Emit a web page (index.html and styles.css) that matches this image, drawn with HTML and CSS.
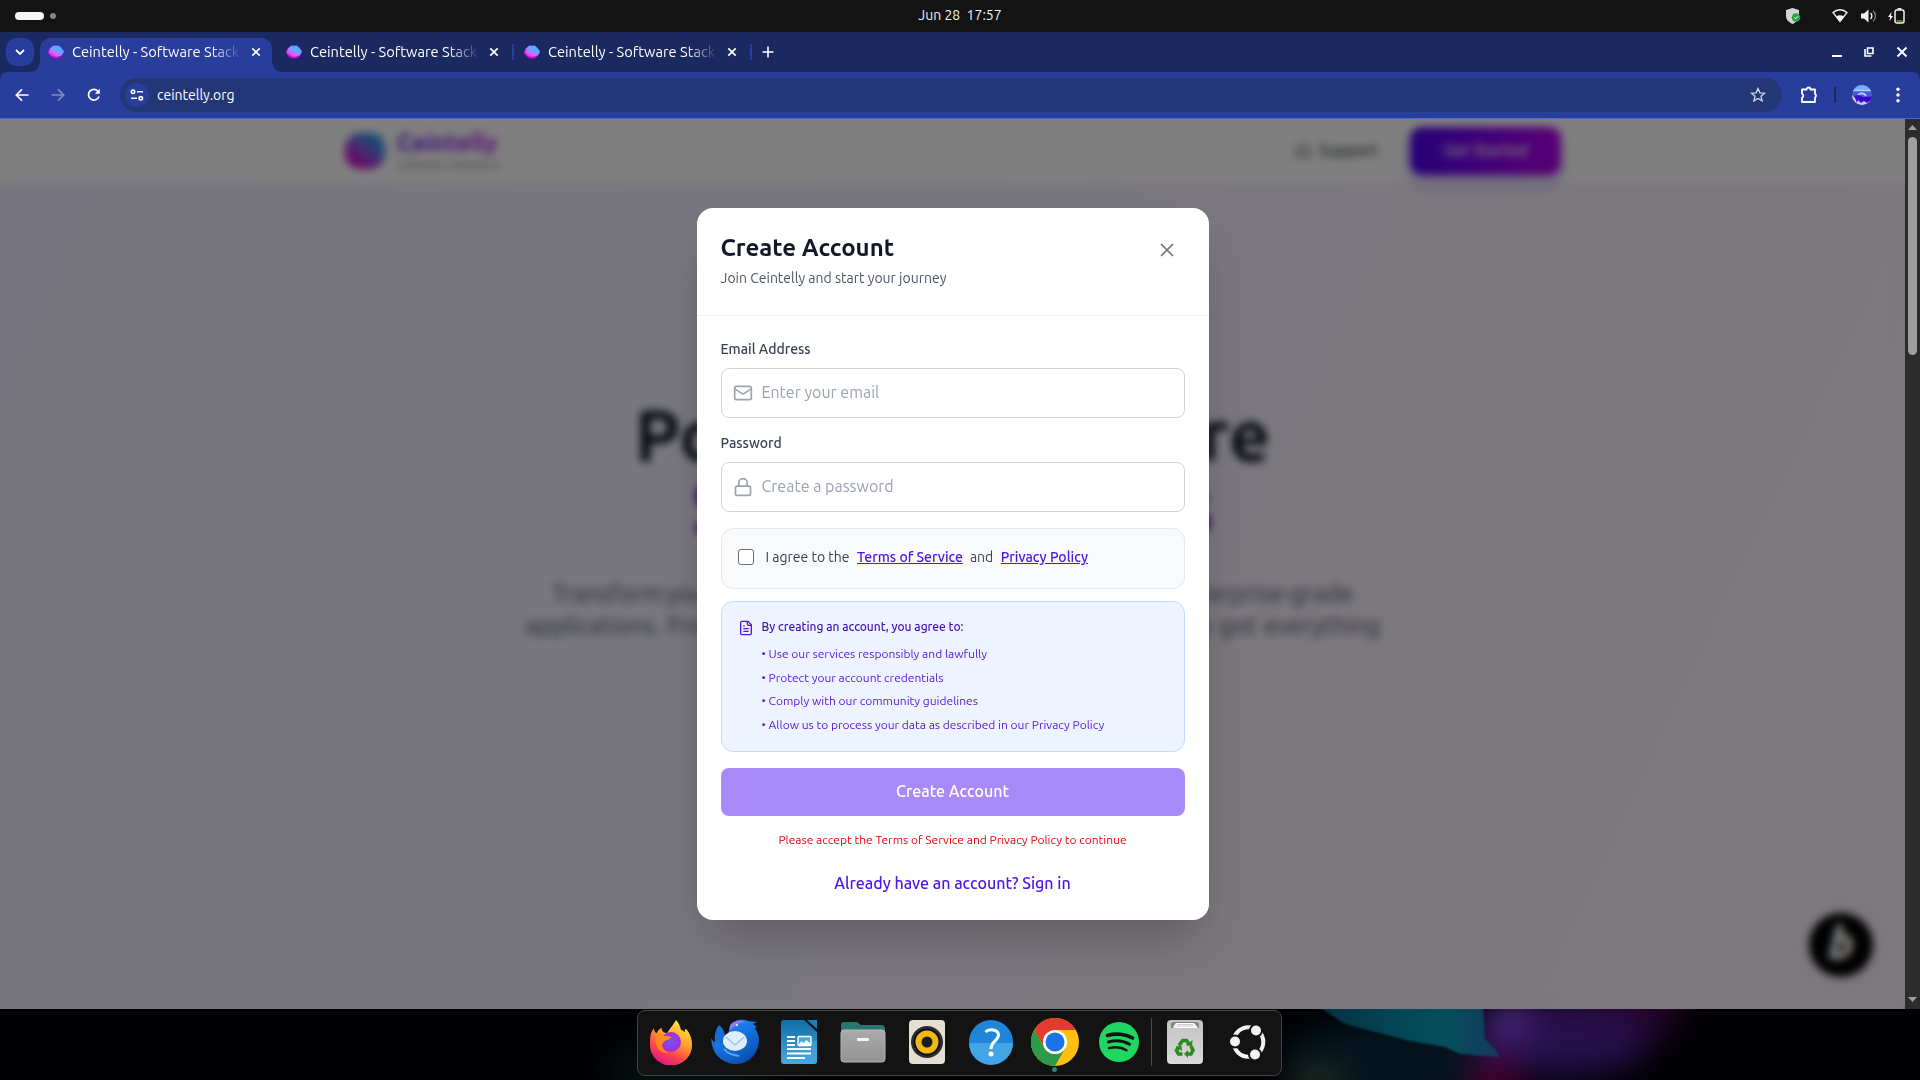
FILE: index.html
```html
<!DOCTYPE html>
<html lang="en">
<head>
  <meta charset="UTF-8">
  <meta name="viewport" content="width=device-width, initial-scale=1.0">
  <title>Ceintelly - Software Stack</title>
  <link rel="stylesheet" href="styles.css">
</head>
<body>
  <!-- shared gradients and symbols -->
  <svg class="defs" width="0" height="0">
    <defs>
      <linearGradient id="brand" x1="0.9" y1="0" x2="0.1" y2="1">
        <stop offset="0.100" stop-color="#22c3ff"/>
        <stop offset="0.450" stop-color="#7c9cff"/>
        <stop offset="0.700" stop-color="#d860f0"/>
        <stop offset="1" stop-color="#e000d8"/>
      </linearGradient>
      <linearGradient id="brand-deep" x1="0.9" y1="0" x2="0.1" y2="1">
        <stop offset="0.150" stop-color="#1f9bea"/>
        <stop offset="0.500" stop-color="#8a5ae0"/>
        <stop offset="0.800" stop-color="#d010d0"/>
      </linearGradient>
      <symbol id="favicon" viewBox="0 0 16 16" preserveAspectRatio="none">
        <path d="M5 1l1.500-.8L8 1l1.500-.8L11 1l2.500 2L16 7v2l-2.500 4-2.500 2-1.500.8L8 15l-1.500.8L5 15l-2.500-2L0 9V7l2.500-4z" fill="#c800dc"/>
        <path d="M2 4L5 .8h6l2.500 2.500L16 7.500l-2.500 4.500L8 14l-4-1.500L.5 9z" fill="url(#brand)"/>
      </symbol>
      <symbol id="close" viewBox="0 0 12 12">
        <path d="M2.300 2.300l7.400 7.400M9.700 2.300l-7.400 7.400" stroke="currentColor" stroke-width="1.700" fill="none"/>
      </symbol>
    </defs>
  </svg>

  <div class="desktop">
    <div class="topbar">
      <div class="workspaces"><span class="ws active"></span><span class="ws"></span></div>
      <div class="clock">Jun 28&nbsp; 17:57</div>
      <div class="tray">
        <svg class="tray-shield" width="15" height="16" viewBox="0 0 15 16">
          <path d="M6.500 0L13 2v6c0 4-3.500 6.500-6.500 8C3.500 14.500 0 12 0 8V2z" fill="#d4d4d4"/>
          <circle cx="10" cy="9.500" r="4.300" fill="#27a844"/>
          <path d="M8.200 9.500l1.400 1.400 2.400-2.600" stroke="#fff" fill="none"/>
        </svg>
        <svg width="16" height="14" viewBox="0 0 16 14">
          <path d="M1 3.500C5-.2 11-.2 15 3.500L8 12.500z" fill="none" stroke="#f2f2f2" stroke-width="1.300"/>
          <path d="M4.200 7.500c2.200-1.600 5.400-1.600 7.600 0L8 12.800z" fill="#f2f2f2"/>
        </svg>
        <svg class="tray-volume" width="16" height="14" viewBox="0 0 16 14">
          <path d="M0 4.500h3L7.500.5v13L3 9.500H0z" fill="#f2f2f2"/>
          <path d="M9.500 4c1.800 1.600 1.800 4.400 0 6" stroke="#f2f2f2" stroke-width="1.400" fill="none"/>
          <path d="M12 1.800c3.300 2.700 3.300 7.700 0 10.400" stroke="#8c8c8c" stroke-width="1.200" fill="none"/>
        </svg>
        <svg width="17" height="16" viewBox="0 0 17 16">
          <path d="M3.500 4L0 9h2l-.5 4L5 8H3z" fill="#f2f2f2"/>
          <rect x="7" y="2" width="9" height="13" rx="2" fill="none" stroke="#f2f2f2" stroke-width="1.500"/>
          <path d="M9.500.8h4" stroke="#f2f2f2" stroke-width="1.500"/>
          <path d="M8.500 13h6" stroke="#5ea818" stroke-width="1.500"/>
        </svg>
      </div>
    </div>

    <div class="browser">
      <div class="tabstrip">
        <div class="tab-search">
          <svg width="10" height="6" viewBox="0 0 10 6"><path d="M1 1l4 4 4-4" stroke="#fff" stroke-width="1.800" fill="none"/></svg>
        </div>
        <div class="tab active">
          <svg class="favicon"><use href="#favicon"/></svg>
          <span class="tab-title">Ceintelly - Software Stack</span>
          <svg class="tab-close"><use href="#close"/></svg>
        </div>
        <span class="tab-sep hidden"></span>
        <div class="tab">
          <svg class="favicon"><use href="#favicon"/></svg>
          <span class="tab-title">Ceintelly - Software Stack</span>
          <svg class="tab-close"><use href="#close"/></svg>
        </div>
        <span class="tab-sep"></span>
        <div class="tab">
          <svg class="favicon"><use href="#favicon"/></svg>
          <span class="tab-title">Ceintelly - Software Stack</span>
          <svg class="tab-close"><use href="#close"/></svg>
        </div>
        <span class="tab-sep"></span>
        <svg class="new-tab" width="12" height="12" viewBox="0 0 12 12"><path d="M6 .5v11M.5 6h11" stroke="#fff" stroke-width="1.600"/></svg>
        <div class="window-controls">
          <svg width="10" height="12" viewBox="0 0 10 12"><path d="M0 10h10" stroke="#fff" stroke-width="2"/></svg>
          <svg width="10" height="10" viewBox="0 0 10 10"><path d="M1 2v7h6.500M3.500 1h5.500v5.500H3.500z" fill="none" stroke="#fff" stroke-width="1.600"/></svg>
          <svg width="12" height="12" viewBox="0 0 12 12"><path d="M1.500 1.500l9 9M10.500 1.500l-9 9" stroke="#fff" stroke-width="1.900"/></svg>
        </div>
      </div>

      <div class="toolbar">
        <div class="nav">
          <svg width="14" height="14" viewBox="0 0 14 14"><path d="M13.500 7H1.500M7 1.300L1.300 7 7 12.700" stroke="#fff" stroke-width="1.700" fill="none"/></svg>
          <svg class="disabled" width="14" height="14" viewBox="0 0 14 14"><path d="M.5 7h12M7 1.300L12.700 7 7 12.700" stroke="#fff" stroke-width="1.700" fill="none"/></svg>
          <svg width="14" height="14" viewBox="0 0 14 14"><path d="M12 8.500A5.400 5.400 0 1 1 11.200 3.400" stroke="#fff" stroke-width="1.700" fill="none"/><path d="M12.800.8v4.900H7.900z" fill="#fff"/></svg>
        </div>
        <div class="omnibox">
          <div class="site-info">
            <svg width="14" height="12" viewBox="0 0 14 12"><g stroke="#fff" stroke-width="1.600" fill="none"><circle cx="3" cy="2.700" r="1.700"/><path d="M7 2.700h6M1 9.300h6"/><circle cx="10.800" cy="9.300" r="1.700"/></g></svg>
          </div>
          <span class="url">ceintelly.org</span>
          <svg class="star" width="16" height="16" viewBox="0 0 16 16"><path d="M8 1.500l1.900 4.300 4.700.4-3.600 3.100 1.100 4.600L8 11.500l-4.100 2.400L5 9.300 1.400 6.200l4.700-.4z" fill="none" stroke="#d4d8e6" stroke-width="1.300"/></svg>
        </div>
        <div class="toolbar-right">
          <svg width="18" height="18" viewBox="0 0 18 18"><path d="M2 3.500h4.500a2 2 0 0 1 4 0H15v4.500a2 2 0 0 1 0 3.500V16H2v-4.200a2.200 2.200 0 0 0 0-4z" fill="none" stroke="#fff" stroke-width="1.800" stroke-linejoin="round"/></svg>
          <span class="divider"></span>
          <svg width="20" height="20" viewBox="0 0 20 20">
            <clipPath id="av"><circle cx="10" cy="10" r="10"/></clipPath>
            <g clip-path="url(#av)">
              <path d="M0 0h20v20H0z" fill="#4558e0"/><path d="M0 0h20v5H0z" fill="#6db5ec"/>
              <path d="M1 5.500h18" stroke="#b9c2fa" stroke-width="1.500"/>
              <path d="M6 11c1-3 6-4 8 0" stroke="#c9d0ff" stroke-width="1.600" fill="none"/>
              <path d="M2 11l5-1 6 3 7-2v4l-5 3H5z" fill="#3d0bd0"/>
              <path d="M0 10l3 3 2 5 1-3 3 3 3-2 3 2 4-3-1 6H0z" fill="#c8cdf4"/><path d="M6 12h11l1 3-4 1-2-1-3 2z" fill="#3906c4"/>
            </g>
          </svg>
          <svg class="menu-dots" width="4" height="16" viewBox="0 0 4 16" fill="#fff"><circle cx="2" cy="2.200" r="1.700"/><circle cx="2" cy="8" r="1.700"/><circle cx="2" cy="13.800" r="1.700"/></svg>
        </div>
      </div>

      <div class="viewport">
        <div class="page">
          <div class="site-header">
            <div class="brand">
              <svg class="brand-logo" width="40" height="36" viewBox="0 0 40 36"><rect width="40" height="36" rx="15" fill="url(#brand-deep)"/></svg>
              <div class="brand-text">
                <span class="brand-name">Ceintelly</span>
                <span class="brand-sub">Software Solutions</span>
              </div>
            </div>
            <div class="site-nav">
              <svg width="16" height="16" viewBox="0 0 24 24" fill="none" stroke="#374151" stroke-width="2"><path d="M3 14h3a2 2 0 0 1 2 2v3a2 2 0 0 1-2 2H5a2 2 0 0 1-2-2v-7a9 9 0 0 1 18 0v7a2 2 0 0 1-2 2h-1a2 2 0 0 1-2-2v-3a2 2 0 0 1 2-2h3"/></svg>
              <span class="support">Support</span>
              <span class="get-started">Get Started</span>
            </div>
          </div>
          <div class="hero">
            <h1>Powerful Software</h1>
            <h1 class="accent">Stack Solutions</h1>
            <p class="lead lead-1">Transform your business with cutting-edge technology and enterprise-grade</p>
            <p class="lead lead-2">applications. From web platforms to mobile apps and AI, we've got everything</p>
          </div>
          <div class="badge"><span>b</span></div>
        </div>

        <div class="overlay">
          <div class="modal">
            <div class="modal-header">
              <div>
                <h2>Create Account</h2>
                <p>Join Ceintelly and start your journey</p>
              </div>
              <svg class="modal-close" width="24" height="24" viewBox="0 0 24 24"><path d="M17.500 6.500l-11 11M6.500 6.500l11 11" stroke="#6b7280" stroke-width="1.700" stroke-linecap="round"/></svg>
            </div>
            <div class="modal-body">
              <label>Email Address</label>
              <div class="input">
                <svg width="20" height="20" viewBox="0 0 24 24"><rect x="2" y="4" width="20" height="16" rx="2"/><path d="M22 7l-8.970 5.700a1.940 1.940 0 0 1-2.060 0L2 7"/></svg>
                <span>Enter your email</span>
              </div>
              <label>Password</label>
              <div class="input">
                <svg width="20" height="20" viewBox="0 0 24 24"><rect x="3" y="11" width="18" height="11" rx="2"/><path d="M7 11V7a5 5 0 0 1 10 0v4"/></svg>
                <span>Create a password</span>
              </div>
              <div class="agree">
                <span class="checkbox"></span>
                <span>I agree to the</span>
                <a>Terms of Service</a>
                <span>and</span>
                <a>Privacy Policy</a>
              </div>
              <div class="notice">
                <svg width="16" height="16" viewBox="0 0 24 24"><path d="M15 2H6a2 2 0 0 0-2 2v16a2 2 0 0 0 2 2h12a2 2 0 0 0 2-2V7z"/><path d="M14 2v4a2 2 0 0 0 2 2h4M10 9H8M16 13H8M16 17H8"/></svg>
                <div>
                  <p class="notice-title">By creating an account, you agree to:</p>
                  <ul>
                    <li>• Use our services responsibly and lawfully</li>
                    <li>• Protect your account credentials</li>
                    <li>• Comply with our community guidelines</li>
                    <li>• Allow us to process your data as described in our Privacy Policy</li>
                  </ul>
                </div>
              </div>
              <div class="submit"><span>Create Account</span></div>
              <p class="error">Please accept the Terms of Service and Privacy Policy to continue</p>
              <p class="signin">Already have an account? Sign in</p>
            </div>
          </div>
        </div>

        <div class="scrollbar">
          <svg width="9" height="5" viewBox="0 0 9 5"><path d="M0 5L4.500 0 9 5z" fill="#9f9f9f"/></svg>
          <span class="thumb"></span>
          <svg width="9" height="5" viewBox="0 0 9 5"><path d="M0 0h9L4.500 5z" fill="#9f9f9f"/></svg>
        </div>
      </div>
    </div>

    <div class="shelf">
      <svg class="wallpaper" width="1920" height="71" viewBox="0 0 1920 71">
        <defs>
          <filter id="soft" filterUnits="userSpaceOnUse" x="400" y="-100" width="1500" height="300" color-interpolation-filters="sRGB"><feGaussianBlur stdDeviation="16"/></filter>
          <filter id="edge" color-interpolation-filters="sRGB"><feGaussianBlur stdDeviation="1.200"/></filter>
          <linearGradient id="teal"><stop offset="0" stop-color="#04303c"/><stop offset="0.400" stop-color="#054454"/><stop offset="0.700" stop-color="#064e5c"/><stop offset="1" stop-color="#143a5c"/></linearGradient>
        </defs>
        <rect width="1920" height="71" fill="#010104"/>
        <g filter="url(#soft)">
          <ellipse cx="690" cy="60" rx="90" ry="30" fill="#02100f"/>
          <ellipse cx="1390" cy="55" rx="110" ry="45" fill="#04141e"/>
          <ellipse cx="1318" cy="74" rx="30" ry="18" fill="#202c1c"/>
          <ellipse cx="1600" cy="-6" rx="85" ry="45" fill="#240328"/>
          <ellipse cx="1560" cy="32" rx="90" ry="34" fill="#26104e"/>
          <ellipse cx="1508" cy="12" rx="24" ry="20" fill="#4a2880"/>
          <ellipse cx="1495" cy="72" rx="28" ry="26" fill="#44002f"/>
        </g>
        <path d="M1316-4h167l2 34 10 10 5 8-40-3-15-7-35-6-65-17z" fill="url(#teal)" filter="url(#edge)"/>
      </svg>
      <div class="dock">
        <div class="app">
          <svg width="44" height="46" viewBox="0 0 44 46">
            <defs>
              <linearGradient id="ff" x1="0.800" y1="0" x2="0.300" y2="1"><stop offset="0" stop-color="#fff04a"/><stop offset="0.400" stop-color="#ffa52a"/><stop offset="0.700" stop-color="#ff4a45"/><stop offset="1" stop-color="#e0108c"/></linearGradient>
              <radialGradient id="ffp"><stop offset="0" stop-color="#7654e8"/><stop offset="1" stop-color="#a32be0"/></radialGradient>
            </defs>
            <path d="M5 9c0 4 2 5 3 5 1-4 5-5 5-5-1 3 2 5 5 5 3-5 7-9 9-13 3 3 4 6 5 10 2 0 3 2 4 2-1-3 1-3 1-3 4 4 6 10 6 16a21 20 0 0 1-42 1C1 19 1 14 5 9z" fill="url(#ff)"/>
            <circle cx="22" cy="23" r="10" fill="url(#ffp)"/>
            <path d="M6 15c3-1 7 1 10 2 3 0 5 0 6 1 0 2-4 3-6 4-2 2-3 3-3 5 1 3 3 6 7 7-8 1-15-5-14-19z" fill="#ff8a20"/>
          </svg>
        </div>
        <div class="app">
          <svg width="48" height="48" viewBox="0 0 48 48">
            <defs><linearGradient id="tb" x1="0" y1="0" x2="0.600" y2="1"><stop offset="0" stop-color="#2d8fff"/><stop offset="0.500" stop-color="#1673df"/><stop offset="1" stop-color="#0b4fae"/></linearGradient></defs>
            <path d="M8 7c4 3 6 7 6 13l-2 14 10 10C9 44 1 36 0 20c2 3 3 4 4 4-1-7 1-13 4-17z" fill="#176fd4"/>
            <path d="M19 7c5-6 13-6 18-4l9 1-4 2 4 3-2 1c3 5 4 9 4 13-1 14-11 23-23 23C12 46 4 38 4 24l9 5c2-9 4-12 5-17z" fill="url(#tb)"/>
            <path d="M19 8c4-6 10-6 15-4-7 0-9 4-15 8z" fill="#9b77e5"/>
            <circle cx="26" cy="7" r="1" fill="#fff"/>
            <ellipse cx="24" cy="23" rx="12" ry="10" fill="#dfeefb"/>
            <path d="M15 19l9 8 9-8" stroke="#9cc4ee" stroke-width="1.500" fill="none"/>
            <path d="M13 31c4 5 9 6 15 7" stroke="#4ba8f4" stroke-width="2" fill="none"/>
          </svg>
        </div>
        <div class="app">
          <svg width="38" height="46" viewBox="0 0 38 46">
            <defs><linearGradient id="wr" x1="0" y1="0" x2="0" y2="1"><stop offset="0" stop-color="#0e6da6"/><stop offset="1" stop-color="#4aa9dc"/></linearGradient></defs>
            <path d="M4 1h20l13 12v29a3 3 0 0 1-3 3H4a3 3 0 0 1-3-3V4a3 3 0 0 1 3-3z" fill="url(#wr)"/>
            <path d="M27 1h10v9z" fill="#1880b8"/><path d="M19 22h18v20a3 3 0 0 1-3 3H19z" fill="#3fa5e0" opacity="0.600"/>
            <g stroke="#fff" stroke-width="2"><path d="M7 18h8M7 22h8M7 26h8M7 30h24M7 34.500h24M7 39h18"/></g>
            <rect x="18" y="17.500" width="13" height="9" rx="1" fill="#49a8df" stroke="#fff" stroke-width="1.400"/>
            <path d="M18.500 26l3-4 2 2 3-3 2 2 2 1v2z" fill="#fff"/>
          </svg>
        </div>
        <div class="app">
          <svg width="46" height="42" viewBox="0 0 46 42">
            <defs><linearGradient id="fo" x1="0" y1="0" x2="0" y2="1"><stop offset="0" stop-color="#aaa"/><stop offset="1" stop-color="#939393"/></linearGradient></defs>
            <path d="M4 1h13l4 3h20a4 4 0 0 1 4 4v10H1V4a3 3 0 0 1 3-3z" fill="#2a766f"/>
            <rect x="1" y="9" width="44" height="32" rx="3" fill="url(#fo)" stroke="#b8b8b8"/>
            <rect x="17" y="17" width="12" height="3" rx="1" fill="#f5f5f5"/>
          </svg>
        </div>
        <div class="app">
          <svg width="38" height="46" viewBox="0 0 38 46">
            <rect x="1" y="1" width="36" height="44" rx="4" fill="#e5dfd2"/>
            <circle cx="19" cy="23" r="16" fill="#2c2c33"/><circle cx="19" cy="23" r="13.500" fill="#101014"/>
            <circle cx="19" cy="23" r="11.500" fill="#edb912"/><circle cx="19" cy="23" r="5.500" fill="#1c1c1e"/>
          </svg>
        </div>
        <div class="app">
          <svg width="46" height="46" viewBox="0 0 46 46">
            <circle cx="23" cy="23" r="22" fill="#1f86d9"/><path d="M1 24h44a22 22 0 0 1-44 0z" fill="#42a5e6"/>
            <path d="M17.500 13c3-3.500 13-3 13 3 0 5.500-7.500 6-7.500 14" stroke="#fff" stroke-width="3" fill="none"/><circle cx="23" cy="35" r="2.500" fill="#fff"/>
          </svg>
        </div>
        <div class="app running">
          <svg width="48" height="48" viewBox="0 0 48 48">
            <circle cx="24" cy="24" r="24" fill="#fdc011"/>
            <path d="M3.200 12A24 24 0 0 1 44.800 12H24L13.600 30z" fill="#e33b2e"/>
            <path d="M3.200 12A24 24 0 0 0 24 48l10.400-18A12 12 0 0 1 13.600 30z" fill="#2c9c4b"/>
            <circle cx="24" cy="24" r="12" fill="#fff"/><circle cx="24" cy="24" r="9.500" fill="#1b73e8"/>
          </svg>
        </div>
        <div class="app">
          <svg width="40" height="40" viewBox="0 0 40 40">
            <circle cx="20" cy="20" r="20" fill="#1fd661"/>
            <g fill="none" stroke="#131313" stroke-linecap="round"><path d="M8.500 13.500c8-2.500 18-1.500 25 2.500" stroke-width="3.600"/><path d="M9.500 20c7-2 15-1.200 21 2.300" stroke-width="3"/><path d="M10 26.200c6-1.500 12.500-1 17.500 2" stroke-width="2.400"/></g>
          </svg>
        </div>
        <span class="dock-sep"></span>
        <div class="app trash">
          <svg width="38" height="46" viewBox="0 0 38 46">
            <defs><linearGradient id="tr" x1="0" y1="0" x2="0" y2="1"><stop offset="0" stop-color="#c2c2c2"/><stop offset="1" stop-color="#dadada"/></linearGradient></defs>
            <rect x="1" y="1" width="36" height="44" rx="4" fill="url(#tr)"/>
            <path d="M5 9V5q0-2 3-2h22q3 0 3 2v4z" fill="#858585"/><path d="M7 8l3-4h18l4 5H9z" fill="#fff"/><path d="M9 7h19M11 5.500h16" stroke="#aaa" stroke-width=".6"/>
            <g fill="none" stroke="#2a8c1c" stroke-width="3.600"><path d="M13 26.500l3.700-5h4l2.300 4"/><path d="M25 27l2 4.500-2 3.500h-4"/><path d="M16.500 35h-4l-2-3.500 2-3.500"/></g>
            <g fill="#2a8c1c"><path d="M20 26.500l6 .5.500-6z"/><path d="M22 31v8l-4-4z"/><path d="M9.500 27.500l6-.8.500 5.500z"/></g>
          </svg>
        </div>
        <div class="app ubuntu">
          <svg width="38" height="38" viewBox="0 0 38 38">
            <circle cx="19.500" cy="19" r="14.800" fill="none" stroke="#f2f2f2" stroke-width="4"/>
            <g fill="#f2f2f2" stroke="#131313" stroke-width="2"><circle cx="6" cy="18.500" r="6"/><circle cx="27" cy="7.500" r="6"/><circle cx="26" cy="31.500" r="6"/></g>
          </svg>
        </div>
      </div>
    </div>
  </div>
</body>
</html>
```

FILE: styles.css
```css
* {
  margin: 0;
  padding: 0;
  box-sizing: border-box;
}

body {
  font-family: Ubuntu, 'Noto Sans', sans-serif;
  background: #000;
  overflow: hidden;
}

svg {
  display: block;
  flex-shrink: 0;
}

.defs {
  position: absolute;
}

.desktop {
  width: 1920px;
  height: 1080px;
  display: flex;
  flex-direction: column;
}

/* system bar */
.topbar {
  height: 32px;
  background: #131313;
  display: grid;
  grid-template-columns: 1fr auto 1fr;
  align-items: center;
  padding: 0 15px;
  color: #f2f2f2;
}

.workspaces {
  display: flex;
  align-items: center;
  gap: 6px;
}

.ws {
  width: 6px;
  height: 6px;
  border-radius: 50%;
  background: #858585;
}

.ws.active {
  width: 29px;
  height: 8px;
  border-radius: 4px;
  background: #f4f4f4;
}

.clock {
  font-size: 14px;
  padding-bottom: 2px;
}

.tray {
  display: flex;
  justify-content: flex-end;
  align-items: center;
  gap: 12px;
}

.tray-shield {
  margin-right: 19px;
}

.tray-volume {
  margin: 0 -1px 0 1px;
}

/* browser window */
.browser {
  height: 977px;
  display: flex;
  flex-direction: column;
  background: #1a2960;
}

.tabstrip {
  height: 40px;
  background: #1a2960;
  display: flex;
  align-items: center;
  padding-left: 6px;
  color: #fff;
}

.tab-search {
  width: 28px;
  height: 28px;
  border-radius: 10px;
  background: #283d9c;
  display: flex;
  align-items: center;
  justify-content: center;
  margin-right: 6px;
}

.tab {
  width: 232px;
  height: 34px;
  margin-top: 6px;
  padding: 0 10px 6px 8px;
  display: flex;
  align-items: center;
}

.tab.active {
  position: relative;
  background: #283d9c;
  border-radius: 10px 10px 0 0;
}

.tab.active::before,
.tab.active::after {
  content: '';
  position: absolute;
  bottom: 0;
  width: 10px;
  height: 10px;
}

.tab.active::before {
  left: -10px;
  background: radial-gradient(circle at 0 0, transparent 9.5px, #283d9c 10px);
}

.tab.active::after {
  right: -10px;
  background: radial-gradient(circle at 100% 0, transparent 9.5px, #283d9c 10px);
}

.favicon {
  width: 16px;
  height: 14px;
}

.tab-title {
  width: 167px;
  margin-left: 8px;
  padding-bottom: 1px;
  overflow: hidden;
  white-space: nowrap;
  font-size: 14.67px;
  line-height: 17px;
  -webkit-mask-image: linear-gradient(to right, #000 138px, transparent 170px);
  mask-image: linear-gradient(to right, #000 138px, transparent 170px);
}

.tab-close {
  width: 12px;
  height: 12px;
  margin-left: auto;
}

.tab-sep {
  width: 2px;
  height: 16px;
  margin: 0 2px;
  background: #283d9c;
}

.tab-sep.hidden {
  visibility: hidden;
}

.new-tab {
  margin-left: 8px;
}

.window-controls {
  display: flex;
  align-items: center;
  gap: 22px;
  margin-left: auto;
  padding-right: 12px;
}

.toolbar {
  height: 47px;
  background: #283d9c;
  border-bottom: 1px solid #4a6cc8;
  border-radius: 8px 8px 0 0;
  display: flex;
  align-items: center;
  padding: 0 20px 0 15px;
}

.nav {
  display: flex;
  gap: 22px;
  width: 105px;
}

.disabled {
  opacity: 0.4;
}

.omnibox {
  width: 1662px;
  height: 34px;
  border-radius: 17px;
  background: #233776;
  display: flex;
  align-items: center;
  padding: 0 16px 0 5px;
}

.site-info {
  width: 24px;
  height: 24px;
  border-radius: 50%;
  background: #283d9c;
  display: flex;
  align-items: center;
  justify-content: center;
}

.url {
  margin-left: 8px;
  color: #fff;
  font-size: 14px;
}

.star {
  margin-left: auto;
}

.toolbar-right {
  display: flex;
  align-items: center;
  gap: 16px;
  margin-left: 18px;
}

.menu-dots {
  margin-left: 8px;
}

.divider {
  width: 2px;
  height: 16px;
  background: #1a2960;
}

.viewport {
  position: relative;
  height: 890px;
  display: flex;
  overflow: hidden;
}

.page {
  position: relative;
  flex: 1;
  background: linear-gradient(115deg, #ece9fd 0%, #f2eefd 40%, #f7f0fb 75%, #f9f0fc 100%);
}

.site-header {
  height: 64px;
  padding: 0 344px;
  display: flex;
  align-items: center;
  justify-content: space-between;
  background: #fffffe;
}

.brand,
.site-nav {
  display: flex;
  align-items: center;
}

.brand-logo {
  margin: 0 12px 0 1px;
}

.brand-text {
  display: flex;
  flex-direction: column;
}

.brand-name {
  font-size: 24px;
  line-height: 28px;
  font-weight: 700;
  background: linear-gradient(to right, #5010f0, #b010e0);
  -webkit-background-clip: text;
  background-clip: text;
  color: transparent;
}

.brand-sub {
  font-size: 12px;
  line-height: 16px;
  letter-spacing: 0.1px;
  color: #6b7280;
}

.support {
  margin: 0 32px 2px 8px;
  font-weight: 500;
  color: #374151;
}

.get-started {
  width: 151px;
  height: 48px;
  border-radius: 12px;
  background: linear-gradient(to right, #4d00ee, #b400ea);
  box-shadow: 0 8px 14px rgba(80, 0, 240, 0.25);
  color: #fff;
  font-weight: 500;
  line-height: 46px;
  text-align: center;
}

.hero {
  padding-top: 216px;
  text-align: center;
}

.hero h1 {
  font-size: 72px;
  line-height: 72px;
  font-weight: 700;
  color: #111827;
}

.hero h1.accent {
  white-space: nowrap;
  background: linear-gradient(to right, #6a00e8 36%, #b400ea 50%, #6a00e8 64%);
  -webkit-background-clip: text;
  background-clip: text;
  color: transparent;
}

.lead {
  font-size: 24px;
  line-height: 32px;
  color: #4b5563;
}

.lead-1 {
  padding-top: 35px;
  word-spacing: -2.4px;
}

.lead-2 {
  word-spacing: 1.8px;
}

.badge {
  position: absolute;
  right: 32px;
  bottom: 32px;
  width: 64px;
  height: 64px;
  border-radius: 50%;
  background: #000;
  color: #fff;
  font-size: 42px;
  font-weight: 700;
  font-style: italic;
  line-height: 60px;
  text-align: center;
  -webkit-text-stroke: 2px #fff;
}

.overlay {
  position: absolute;
  inset: 0 15px 0 0;
  display: flex;
  align-items: center;
  justify-content: center;
  background: rgba(0, 0, 0, 0.5);
  backdrop-filter: blur(4px);
}

.modal {
  width: 512px;
  height: 712px;
  border-radius: 16px;
  background: #fff;
  box-shadow: 0 25px 50px -12px rgba(0, 0, 0, 0.25);
}

.modal-header {
  height: 108px;
  padding: 24px;
  border-bottom: 1px solid #f3f4f6;
  display: flex;
  justify-content: space-between;
}

.modal-header h2 {
  font-size: 24px;
  line-height: 32px;
  font-weight: 700;
  color: #111827;
}

.modal-header p {
  margin-top: 4px;
  font-size: 14px;
  line-height: 20px;
  color: #4b5563;
}

.modal-close {
  margin: 6px 6px 0 0;
}

.modal-body {
  padding: 23px 24px 24px;
}

.modal-body label {
  display: block;
  font-size: 14px;
  line-height: 20px;
  font-weight: 500;
  color: #374151;
  margin-bottom: 9px;
}

.input {
  height: 50px;
  border: 1px solid #d1d5db;
  border-radius: 8px;
  margin-bottom: 15px;
  padding-left: 11px;
  display: flex;
  align-items: center;
  gap: 9px;
  font-size: 16px;
  color: #9ca3af;
}

.input span {
  padding-bottom: 2px;
}

.input svg {
  fill: none;
  stroke: #9ca3af;
  stroke-width: 2;
}

.agree {
  height: 61px;
  border: 1px solid #e5e7eb;
  border-radius: 12px;
  background: #f9fafb;
  padding: 0 16px 4px;
  display: flex;
  align-items: center;
  font-size: 14px;
  color: #374151;
  margin: 16px 0 12px;
}

.checkbox {
  width: 16px;
  height: 16px;
  border: 1px solid #6b6b6b;
  border-radius: 3px;
  background: #fff;
  margin-right: 12px;
}

.agree a {
  color: #4f14e8;
  font-weight: 500;
  text-decoration: underline;
  margin: 0 7px 0 7.5px;
}

.notice {
  height: 151px;
  border: 1px solid #bfdbfe;
  border-radius: 12px;
  background: #eef4ff;
  padding: 16px;
  display: flex;
  gap: 8px;
  font-size: 12px;
  margin-bottom: 16px;
}

.notice svg {
  margin-top: 2px;
  fill: none;
  stroke: #4f14e8;
  stroke-width: 2;
}

.notice-title {
  line-height: 18px;
  font-weight: 500;
  color: #4210b0;
  margin-bottom: 6px;
}

.notice ul {
  list-style: none;
}

.notice li {
  line-height: 23.6px;
  color: #5414dc;
}

.submit {
  height: 48px;
  border-radius: 8px;
  background: #a78af7;
  color: #fff;
  font-weight: 500;
  line-height: 46px;
  text-align: center;
}

.error {
  margin-top: 16px;
  font-size: 12px;
  line-height: 16px;
  color: #e7000b;
  text-align: center;
}

.signin {
  margin-top: 23px;
  font-size: 16px;
  line-height: 24px;
  font-weight: 500;
  color: #4f14e8;
  text-align: center;
}

.scrollbar {
  width: 15px;
  background: #2c2c2c;
  display: flex;
  flex-direction: column;
  align-items: center;
  padding: 6px 0 7px;
}

.thumb {
  width: 9px;
  height: 218px;
  margin: 7px 0 auto;
  border-radius: 5px;
  background: #9f9f9f;
}

/* dock */
.shelf {
  position: relative;
  height: 71px;
  display: flex;
  justify-content: center;
}

.wallpaper {
  position: absolute;
  inset: 0;
}

.dock {
  position: relative;
  width: 645px;
  height: 66px;
  margin-top: 1px;
  margin-right: 2px;
  padding: 0 0 2px 1px;
  border: 1px solid #454545;
  border-radius: 8px;
  background: #131313;
  display: flex;
  align-items: center;
}

.app {
  position: relative;
  width: 64px;
  height: 62px;
  display: flex;
  align-items: center;
  justify-content: center;
}

.running::after {
  content: '';
  position: absolute;
  bottom: 1px;
  width: 5px;
  height: 5px;
  border-radius: 50%;
  background: #2f8080;
}

.dock-sep {
  width: 1px;
  height: 48px;
  background: #4a4a4a;
}

.trash {
  width: 67px;
}

.ubuntu {
  width: 59px;
}
```
